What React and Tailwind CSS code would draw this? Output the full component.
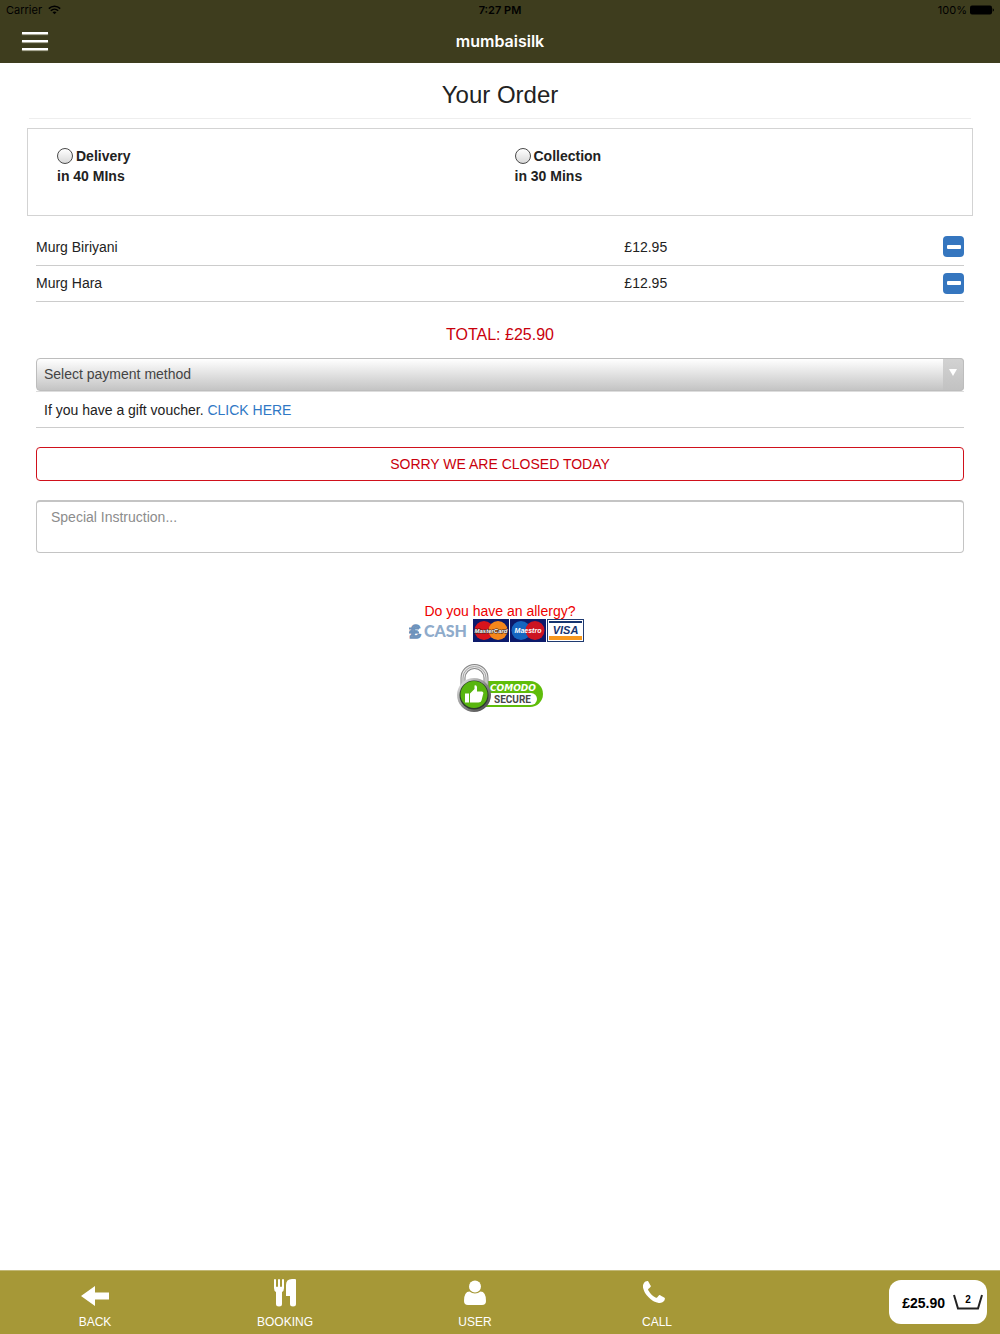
import React, { useState } from "react";

const startItems = [
  { id: 1, name: "Murg Biriyani", price: 12.95 },
  { id: 2, name: "Murg Hara", price: 12.95 },
];

function StatusBar() {
  return (
    <div className="grid grid-cols-3 items-center h-5 px-[6px] text-[11px] leading-5 text-black">
      <div className="flex items-center gap-[6px]">
        <span>Carrier</span>
        <svg width="13" height="10" viewBox="0 0 13 10" fill="none" stroke="currentColor" strokeWidth="1.5" aria-hidden="true">
          <path d="M0.8 3.6C4 0.4 9 0.4 12.2 3.6" />
          <path d="M2.8 5.7C4.9 3.6 8.1 3.6 10.2 5.7" />
          <path d="M4.5 7.3C5.6 6.2 7.4 6.2 8.5 7.3L6.5 9.3Z" fill="currentColor" stroke="none" />
        </svg>
      </div>
      <div className="text-center font-semibold">7:27 PM</div>
      <div className="flex items-center justify-end gap-[3px]">
        <span>100%</span>
        <svg width="24" height="10" viewBox="0 0 24 10" aria-hidden="true">
          <rect x="0" y="0.5" width="22" height="9" rx="2" />
          <path d="M22.6 3.3Q24 4 24 5T22.600 6.700Z" />
        </svg>
      </div>
    </div>
  );
}

function Header() {
  return (
    <header className="bg-[#3e3d1e] h-[63px] font-[Inter,sans-serif]">
      <StatusBar />
      <div className="grid grid-cols-[1fr_auto_1fr] items-center h-[42px] px-[22px]">
        <button type="button" aria-label="Menu" className="w-[26px] flex flex-col gap-[6px]">
          <span className="h-[2px] bg-white shadow-[0_1px_1px_#b5b4a0]"></span>
          <span className="h-[2px] bg-white shadow-[0_1px_1px_#b5b4a0]"></span>
          <span className="h-[2px] bg-white shadow-[0_1px_1px_#b5b4a0]"></span>
        </button>
        <h1 className="text-base font-semibold text-white">mumbaisilk</h1>
      </div>
    </header>
  );
}

function OrderType({ value, label, time, selected, onSelect }) {
  return (
    <label className="text-sm leading-5 font-bold">
      <span className="flex items-center gap-[3px]">
        <input
          type="radio"
          name="orderType"
          value={value}
          checked={selected === value}
          onChange={() => onSelect(value)}
          className="appearance-none w-4 h-4 rounded-full border border-[#4a4a4a] bg-linear-to-b from-white to-[#d9d9d9] checked:to-[#555]"
        />
        {label}
      </span>
      {time}
    </label>
  );
}

function PaymentCards() {
  return (
    <svg width="176" height="24" viewBox="0 0 176 24" role="img" aria-label="Cash, MasterCard, Maestro and Visa" className="block">
      <text x="2" y="19" fontSize="19" fontFamily="Liberation Sans, sans-serif" fontWeight="bold" fill="#7da0c6" stroke="#6d92bb" strokeWidth="1.5">£</text>
      <path d="M1 9.500H11M1 13.500H11" stroke="#6d92bb" strokeWidth="2" />
      <text x="16" y="18" fontSize="16" fontFamily="Lato, sans-serif" fontWeight="900" fill="#8fabcb">CASH</text>
      <rect x="65" y="0" width="36" height="23" fill="#0c1a6b" />
      <circle cx="76" cy="11.500" r="9.500" fill="#d8141c" />
      <circle cx="90" cy="11.500" r="9.500" fill="#f5861b" />
      <rect x="102" y="0" width="36" height="23" fill="#0c1a6b" />
      <circle cx="113" cy="11.500" r="9.500" fill="#1565c0" />
      <circle cx="127" cy="11.500" r="9.500" fill="#cc1422" />
      <g fontFamily="Liberation Sans, sans-serif" fontWeight="bold" fontStyle="italic" fill="#fff" textAnchor="middle">
        <text x="83" y="14" fontSize="6" stroke="#30201f" strokeWidth="1" paintOrder="stroke">MasterCard</text>
        <text x="120" y="14" fontSize="7">Maestro</text>
      </g>
      <rect x="139.500" y="0.500" width="36" height="22" fill="#fff" stroke="#1f3a70" />
      <rect x="141" y="2" width="33" height="2" fill="#16356f" />
      <rect x="141" y="17" width="33" height="4" fill="#f7981d" />
      <text x="157.500" y="15" fontSize="11" fontFamily="Liberation Sans, sans-serif" fontWeight="bold" fontStyle="italic" fill="#16356f" textAnchor="middle">VISA</text>
    </svg>
  );
}

function SecureBadge() {
  return (
    <svg width="88" height="48" viewBox="0 0 88 48" role="img" aria-label="Comodo Secure" className="block">
      <defs>
        <linearGradient id="steel" x1="0" y1="0" x2="1" y2="1">
          <stop offset="0" stopColor="#f4f4f4" />
          <stop offset="0.5" stopColor="#8d8d8d" />
          <stop offset="1" stopColor="#3c3c3c" />
        </linearGradient>
      </defs>
      <path d="M22 17H74A13 13 0 0 1 74 43H22Z" fill="#5fbd0a" />
      <path d="M30 29H75A6 6 0 0 1 75 41H28Z" fill="#fff" />
      <path d="M7 23V14A11.500 11.500 0 0 1 30 14V23" fill="none" stroke="#858585" strokeWidth="5" />
      <path d="M7 23V14A11.500 11.500 0 0 1 30 14V23" fill="none" stroke="#e6e6e6" strokeWidth="3" />
      <path d="M7 23V14A11.500 11.500 0 0 1 30 14V23" fill="none" stroke="#a5a5a5" strokeWidth="1" />
      <circle cx="18" cy="31" r="17" fill="url(#steel)" />
      <circle cx="18" cy="31" r="14.500" fill="#2c3a2c" />
      <circle cx="18" cy="30.500" r="13.500" fill="#58b50f" />
      <path d="M9 29.500H13V38.500H9ZM14 29.500L18.500 25V21.500Q20.500 20.500 21 23V27.500H26Q28 28 27 30.500L25.500 36.500Q25 38.500 22.500 38.500H14Z" fill="#fff" />
      <text x="34" y="27" fontSize="9" fontFamily="DejaVu Sans, sans-serif" fontWeight="bold" fontStyle="italic" fill="#fff">COMODO</text>
      <text x="38" y="39" fontSize="10" fontFamily="Roboto, sans-serif" fontWeight="bold" fill="#474747">SECURE</text>
    </svg>
  );
}

function BackIcon() {
  return (
    <svg width="30" height="30" viewBox="0 0 30 30" fill="currentColor" aria-hidden="true">
      <path d="M1 18L15 8V14.500H29V21.500H15V28Z" />
    </svg>
  );
}

function BookingIcon() {
  return (
    <svg width="30" height="30" viewBox="0 0 30 30" fill="currentColor" aria-hidden="true">
      <path d="M4 2Q4 1 5 1T6 2V8Q6 9 7 9T8 8V2Q8 1 9 1T10 2V8Q10 9 11 9T12 8V2Q12 1 13 1T14 2V10Q14 13 12 14V26Q12 28.500 9 28.500T6 26V14Q4 13 4 10Z" />
      <path d="M26 2V26Q26 28.500 23 28.500T20 26V18H16V7Q16 1 22 1H25Q26 1 26 2Z" />
    </svg>
  );
}

function UserIcon() {
  return (
    <svg width="30" height="30" viewBox="0 0 30 30" fill="currentColor" aria-hidden="true">
      <circle cx="15" cy="8.500" r="6" />
      <path d="M9.500 13.500Q4 13.500 4 23Q4 27 8 27H22Q26 27 26 23Q26 13.500 20.500 13.500Q18 15.500 15 15.500T9.500 13.500Z" />
    </svg>
  );
}

function CallIcon() {
  return (
    <svg width="28" height="30" viewBox="200 0 1792 1792" fill="currentColor" aria-hidden="true">
      <path d="M1600 1240q0 27-10 70.500t-21 68.500q-21 50-122 106-94 51-186 51-27 0-52.500-3.500t-57.500-12.500-47.500-14.500-55.500-20.500-49-18q-98-35-175-83-128-79-264.500-215.500t-215.500-264.500q-48-77-83-175-3-9-18-49t-20.500-55.500-14.500-47.500-12.500-57.500-3.500-52.500q0-92 51-186 56-101 106-122 25-11 68.500-21t70.500-10q14 0 21 3 18 6 53 76 11 19 30 54t35 63.500 31 53.500q3 4 17.500 25t21.500 35.500 7 28.500q0 20-28.500 50t-62 55-62 53-28.500 46q0 9 5 22.500t8.500 20.500 14 24 11.500 19q76 137 174 235t235 174q2 1 19 11.500t24 14 20.500 8.500 22.500 5q18 0 46-28.500t53-62 55-62 50-28.500q14 0 28.500 7t35.500 21.500 25 17.500q25 15 53.500 31t63.500 35 54 30q70 35 76 53 3 7 3 21z" />
    </svg>
  );
}

function Footer({ total, count }) {
  const links = [
    { label: "BACK", icon: <BackIcon /> },
    { label: "BOOKING", icon: <BookingIcon /> },
    { label: "USER", icon: <UserIcon /> },
    { label: "CALL", icon: <CallIcon /> },
  ];

  return (
    <footer className="grid grid-cols-[95fr_95fr_95fr_87fr_128fr] h-16 border-t border-[#c2b877] bg-[#a69837] text-white">
      {links.map((link) => (
        <a key={link.label} href="#" className="flex flex-col items-center gap-1 pt-[7px] text-xs leading-5">
          {link.icon}
          {link.label}
        </a>
      ))}
      <div className="flex items-start justify-end pt-[9px] pr-[13px]">
        <button type="button" className="flex items-center justify-end gap-2 w-[98px] h-11 pr-1 rounded-xl bg-white text-black text-sm font-bold">
          <span className="pt-[2px]">{total}</span>
          <span className="grid place-items-center w-[30px]">
            <svg width="30" height="16" viewBox="0 0 30 16" fill="none" stroke="#222" strokeWidth="2" className="col-start-1 row-start-1" aria-hidden="true">
              <path d="M1 1L5 14.500H25L29 1" />
            </svg>
            <span className="col-start-1 row-start-1 pb-1 text-[10px] leading-3">{count}</span>
          </span>
        </button>
      </div>
    </footer>
  );
}

function App() {
  const [items, setItems] = useState(startItems);
  const [orderType, setOrderType] = useState("");

  const total = "£" + items.reduce((sum, item) => sum + item.price, 0).toFixed(2);

  const removeItem = (id) => {
    setItems(items.filter((item) => item.id !== id));
  };

  return (
    <div className="min-h-screen flex flex-col bg-white text-[#222] font-['Liberation_Sans',Arial,sans-serif]">
      <Header />

      <main className="flex-1 px-[27px]">
        <h2 className="mx-[2px] h-14 pt-4 border-b border-[#eee] text-center text-2xl">Your Order</h2>

        <div className="mt-[9px] h-[88px] grid grid-cols-2 pl-[29px] pt-[17px] border border-[#d3d3d3]">
          <OrderType value="delivery" label="Delivery" time="in 40 MIns" selected={orderType} onSelect={setOrderType} />
          <OrderType value="collection" label="Collection" time="in 30 Mins" selected={orderType} onSelect={setOrderType} />
        </div>

        <div className="px-[9px] pt-[13px] text-sm">
          <table className="w-full table-fixed border-collapse">
            <tbody>
              {items.map((item) => (
                <tr key={item.id} className="h-9 border-b border-[#ccc]">
                  <td className="w-[63.4%]">{item.name}</td>
                  <td>£{item.price.toFixed(2)}</td>
                  <td className="w-10">
                    <button
                      type="button"
                      aria-label={`Remove ${item.name}`}
                      onClick={() => removeItem(item.id)}
                      className="ml-auto flex items-center justify-center w-[21px] h-[21px] rounded bg-[#3576bf]"
                    >
                      <span className="w-[14px] h-1 rounded-[1px] bg-white"></span>
                    </button>
                  </td>
                </tr>
              ))}
            </tbody>
          </table>

          <p className="pt-[21px] pb-[11px] text-center text-base text-[#c9000c]">TOTAL: {total}</p>

          <div className="grid border-b border-[#ddd]">
            <select
              aria-label="Payment method"
              className="col-start-1 row-start-1 appearance-none h-[33px] w-full rounded border border-[#bdbdbd] bg-linear-to-b from-white to-[#c4c4c4] px-[7px] text-sm text-[#444]"
            >
              <option>Select payment method</option>
              <option>Cash</option>
              <option>Card</option>
            </select>
            <span className="col-start-1 row-start-1 justify-self-end pointer-events-none flex justify-center w-[21px] h-[33px] pt-[10px] rounded-r border border-l-0 border-[#bdbdbd] bg-linear-to-b from-[#d2d2d2] to-[#c2c2c2]">
              <svg width="8" height="7" viewBox="0 0 8 7" aria-hidden="true">
                <path d="M0 0H8L4 7Z" fill="#fff" />
              </svg>
            </span>
          </div>

          <p className="h-9 px-2 leading-9 border-b border-[#ccc]">
            If you have a gift voucher.{" "}
            <a href="#" className="text-[#2f78c5]">CLICK HERE</a>
          </p>

          <div className="mt-[19px] h-[34px] leading-8 rounded border border-[#d0111b] text-center text-[#c9000c]">
            SORRY WE ARE CLOSED TODAY
          </div>

          <textarea
            aria-label="Special instruction"
            placeholder="Special Instruction..."
            className="block mt-[19px] w-full h-[53px] resize-none rounded border border-t-2 border-[#c4c4c4] px-[14px] py-[5px] leading-5 placeholder:text-[#8c8c8c]"
          ></textarea>
        </div>

        <div className="flex flex-col items-center pt-[50px]">
          <a href="#" className="text-sm leading-4 text-[#ee0000]">Do you have an allergy?</a>
          <div className="pr-2">
            <PaymentCards />
          </div>
          <div className="pt-[21px]">
            <SecureBadge />
          </div>
        </div>
      </main>

      <Footer total={total} count={items.length} />
    </div>
  );
}

export default App;
